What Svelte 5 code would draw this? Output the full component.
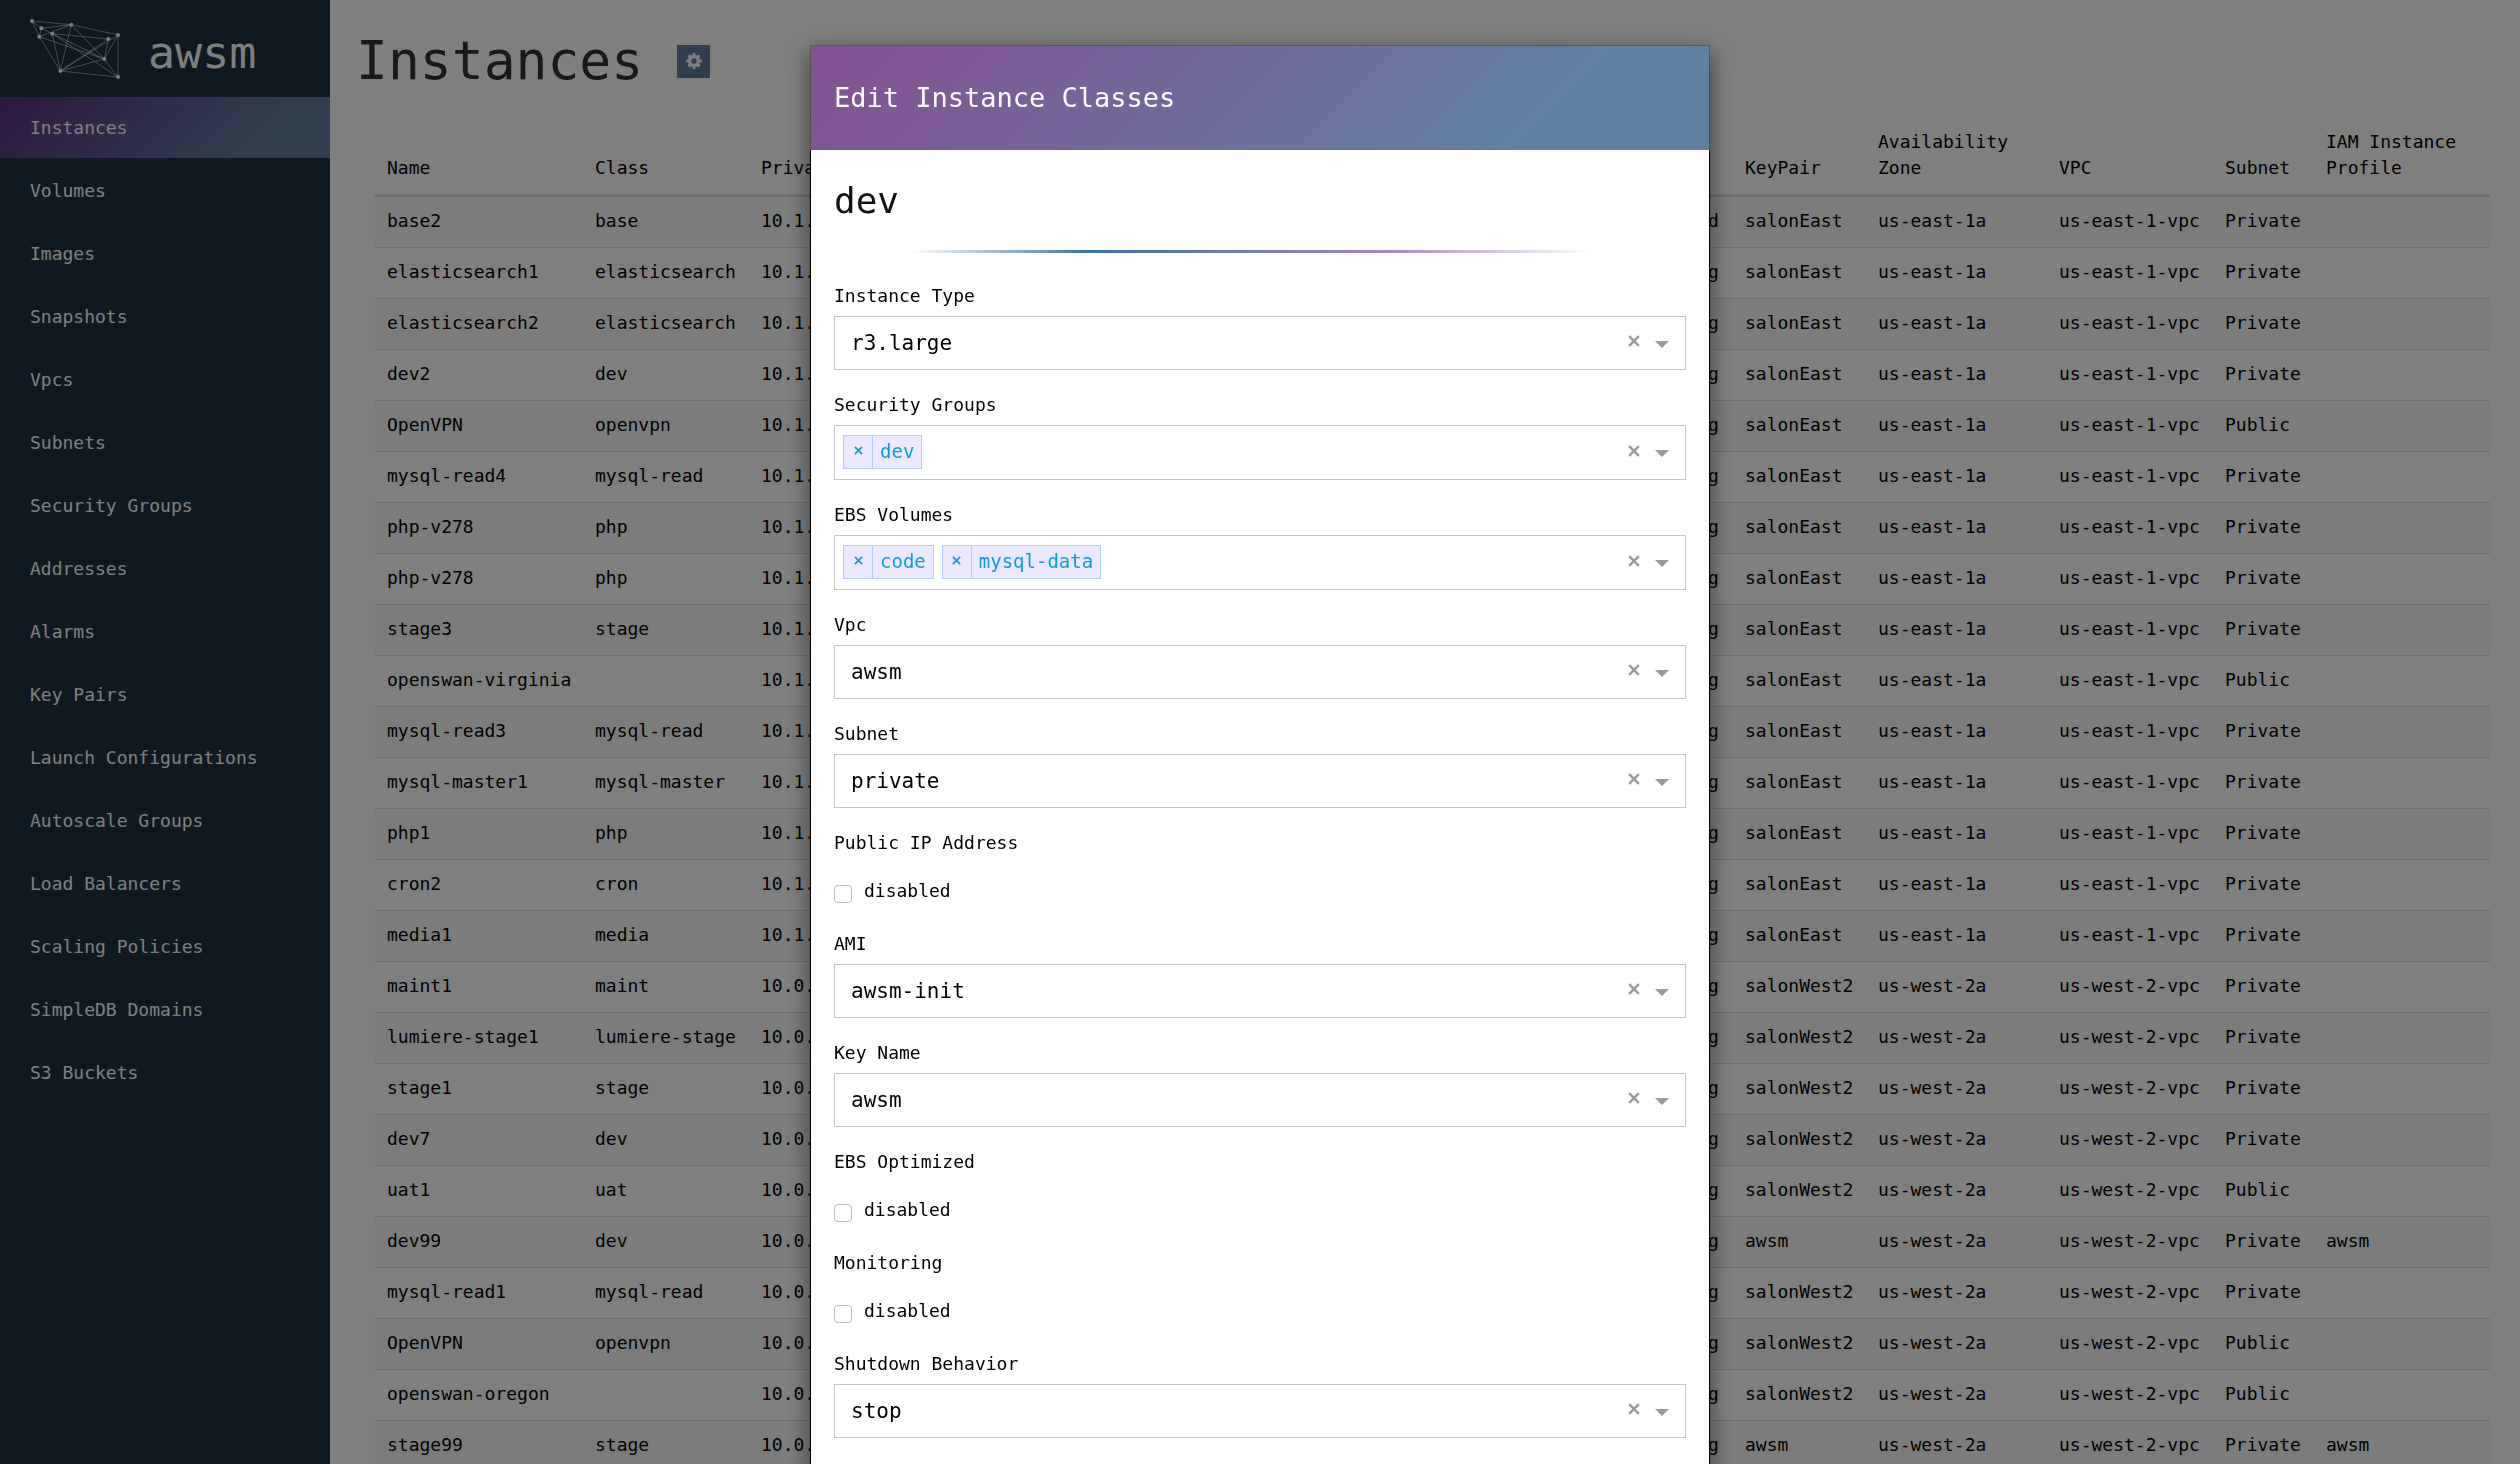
<script>
  const navItems = [
    'Instances',
    'Volumes',
    'Images',
    'Snapshots',
    'Vpcs',
    'Subnets',
    'Security Groups',
    'Addresses',
    'Alarms',
    'Key Pairs',
    'Launch Configurations',
    'Autoscale Groups',
    'Load Balancers',
    'Scaling Policies',
    'SimpleDB Domains',
    'S3 Buckets'
  ];

  /**
   * [name, class, region, subnet, key pair, iam profile]
   */
  const rows = [
    ['base2', 'base', 'east', 'Private', 'salonEast', ''],
    ['elasticsearch1', 'elasticsearch', 'east', 'Private', 'salonEast', ''],
    ['elasticsearch2', 'elasticsearch', 'east', 'Private', 'salonEast', ''],
    ['dev2', 'dev', 'east', 'Private', 'salonEast', ''],
    ['OpenVPN', 'openvpn', 'east', 'Public', 'salonEast', ''],
    ['mysql-read4', 'mysql-read', 'east', 'Private', 'salonEast', ''],
    ['php-v278', 'php', 'east', 'Private', 'salonEast', ''],
    ['php-v278', 'php', 'east', 'Private', 'salonEast', ''],
    ['stage3', 'stage', 'east', 'Private', 'salonEast', ''],
    ['openswan-virginia', '', 'east', 'Public', 'salonEast', ''],
    ['mysql-read3', 'mysql-read', 'east', 'Private', 'salonEast', ''],
    ['mysql-master1', 'mysql-master', 'east', 'Private', 'salonEast', ''],
    ['php1', 'php', 'east', 'Private', 'salonEast', ''],
    ['cron2', 'cron', 'east', 'Private', 'salonEast', ''],
    ['media1', 'media', 'east', 'Private', 'salonEast', ''],
    ['maint1', 'maint', 'west', 'Private', 'salonWest2', ''],
    ['lumiere-stage1', 'lumiere-stage', 'west', 'Private', 'salonWest2', ''],
    ['stage1', 'stage', 'west', 'Private', 'salonWest2', ''],
    ['dev7', 'dev', 'west', 'Private', 'salonWest2', ''],
    ['uat1', 'uat', 'west', 'Public', 'salonWest2', ''],
    ['dev99', 'dev', 'west', 'Private', 'awsm', 'awsm'],
    ['mysql-read1', 'mysql-read', 'west', 'Private', 'salonWest2', ''],
    ['OpenVPN', 'openvpn', 'west', 'Public', 'salonWest2', ''],
    ['openswan-oregon', '', 'west', 'Public', 'salonWest2', ''],
    ['stage99', 'stage', 'west', 'Private', 'awsm', 'awsm']
  ];

  const regions = {
    east: { ip: '10.1.', zone: 'us-east-1a', vpc: 'us-east-1-vpc' },
    west: { ip: '10.0.', zone: 'us-west-2a', vpc: 'us-west-2-vpc' }
  };

  const fields = [
    { id: 'type', label: 'Instance Type', kind: 'select', value: 'r3.large' },
    { id: 'groups', label: 'Security Groups', kind: 'multi', value: ['dev'] },
    { id: 'volumes', label: 'EBS Volumes', kind: 'multi', value: ['code', 'mysql-data'] },
    { id: 'vpc', label: 'Vpc', kind: 'select', value: 'awsm' },
    { id: 'subnet', label: 'Subnet', kind: 'select', value: 'private' },
    { id: 'public-ip', label: 'Public IP Address', kind: 'check' },
    { id: 'ami', label: 'AMI', kind: 'select', value: 'awsm-init' },
    { id: 'key', label: 'Key Name', kind: 'select', value: 'awsm' },
    { id: 'ebs', label: 'EBS Optimized', kind: 'check' },
    { id: 'monitoring', label: 'Monitoring', kind: 'check' },
    { id: 'shutdown', label: 'Shutdown Behavior', kind: 'select', value: 'stop' }
  ];

  // logo graph
  const points = [
    [6, 6], [34, 28], [28, 53], [67, 44], [124, 17],
    [235, 60], [264, 48], [223, 120], [264, 174], [91, 156]
  ];
  const edges = [
    [0, 4], [0, 1], [0, 2], [1, 4], [1, 2], [2, 4], [2, 9], [2, 7], [1, 3],
    [3, 5], [3, 9], [3, 7], [3, 8], [4, 6], [4, 9], [4, 7], [5, 7], [5, 9],
    [6, 7], [6, 8], [6, 9], [7, 9], [7, 8], [8, 9]
  ];
</script>

<div class="app">
  <aside>
    <div class="brand">
      <svg class="logo" viewBox="0 0 270 180" aria-hidden="true">
        {#each edges as [a, b]}
          <line x1={points[a][0]} y1={points[a][1]} x2={points[b][0]} y2={points[b][1]} />
        {/each}
        {#each points as [x, y]}
          <circle cx={x} cy={y} r="6" />
        {/each}
      </svg>
      <span>awsm</span>
    </div>
    <nav>
      {#each navItems as item, i}
        <a href="#{i}" class:active={i === 0}>{item}</a>
      {/each}
    </nav>
  </aside>

  <main>
    <header class="title">
      <h1>Instances</h1>
      <button class="gear" aria-label="Settings">
        <svg viewBox="0 0 16 16" aria-hidden="true">
          <path
            fill-rule="evenodd"
            d="M6.8 0h2.4l.4 2.1 1.2.5 1.8-1.2 1.9 1.9-1.2 1.8.5 1.2 2.2.4v2.5l-2.2.4-.5 1.2 1.2 1.8-1.9 1.9-1.8-1.2-1.2.5L9.2 16H6.8l-.4-2.2-1.2-.5-1.8 1.2-1.9-1.9 1.2-1.8-.5-1.2L0 9.2V6.7l2.2-.4.5-1.2-1.2-1.8 1.9-1.9 1.8 1.2 1.2-.5zM8 5.3a2.7 2.7 0 1 0 0 5.4 2.7 2.7 0 0 0 0-5.4z"
          />
        </svg>
      </button>
    </header>

    <table>
      <colgroup>
        <col class="c-name" />
        <col class="c-class" />
        <col />
        <col class="c-state" />
        <col class="c-key" />
        <col class="c-zone" />
        <col class="c-vpc" />
        <col class="c-subnet" />
        <col class="c-iam" />
      </colgroup>
      <thead>
        <tr>
          <th>Name</th>
          <th>Class</th>
          <th>Private IP</th>
          <th>State</th>
          <th>KeyPair</th>
          <th>Availability Zone</th>
          <th>VPC</th>
          <th>Subnet</th>
          <th>IAM Instance Profile</th>
        </tr>
      </thead>
      <tbody>
        {#each rows as [name, cls, region, subnet, key, iam], i}
          <tr>
            <td>{name}</td>
            <td>{cls}</td>
            <td>{regions[region].ip}</td>
            <td>{i === 0 ? 'stopped' : 'running'}</td>
            <td>{key}</td>
            <td>{regions[region].zone}</td>
            <td>{regions[region].vpc}</td>
            <td>{subnet}</td>
            <td>{iam}</td>
          </tr>
        {/each}
      </tbody>
    </table>
  </main>

  <div class="backdrop">
    <div class="modal" role="dialog" aria-labelledby="modal-title">
      <div class="modal-header">
        <h2 id="modal-title">Edit Instance Classes</h2>
      </div>
      <form class="modal-body">
        <h3>dev</h3>
        <hr />
        {#each fields as field}
          <div class="field">
            <label for={field.id}>{field.label}</label>
            {#if field.kind === 'check'}
              <div class="check">
                <input type="checkbox" id={field.id} />
                <span>disabled</span>
              </div>
            {:else}
              <div class="control" class:multi={field.kind === 'multi'}>
                {#if field.kind === 'multi'}
                  {#each field.value as tag}
                    <span class="tag">
                      <button type="button" aria-label="Remove {tag}">
                        <svg viewBox="0 0 10 10"><path d="M1 1l8 8M9 1l-8 8" /></svg>
                      </button>
                      <span>{tag}</span>
                    </span>
                  {/each}
                  <input type="text" id={field.id} />
                {:else}
                  <select id={field.id}>
                    <option>{field.value}</option>
                  </select>
                {/if}
                <button type="button" class="clear" aria-label="Clear {field.label}">
                  <svg viewBox="0 0 10 10"><path d="M1 1l8 8M9 1l-8 8" /></svg>
                </button>
                <span class="arrow"></span>
              </div>
            {/if}
          </div>
        {/each}
      </form>
    </div>
  </div>
</div>

<style>
  :global(body) {
    margin: 0;
    overflow: hidden;
  }

  .app {
    display: flex;
    height: 100vh;
    overflow: hidden;
    background: #fff;
    color: #000;
    font: 18px/26px 'DejaVu Sans Mono', monospace;
  }

  .app * {
    box-sizing: border-box;
  }

  button,
  input,
  select {
    margin: 0;
    padding: 0;
    border: 0;
    background: none;
    font: inherit;
    color: inherit;
  }

  h1,
  h2,
  h3 {
    margin: 0;
    font-weight: 400;
  }

  aside {
    flex: 0 0 330px;
    background: #1e3244;
    color: #fff;
  }

  .brand {
    display: flex;
    align-items: center;
    gap: 28px;
    height: 97px;
    padding: 0 30px;
    font-size: 45px;
    line-height: 60px;
  }

  .brand span {
    padding-top: 8px;
  }

  .logo {
    width: 90px;
    height: 60px;
  }

  .logo line {
    stroke: rgba(255, 255, 255, 0.5);
    stroke-width: 3;
  }

  .logo circle {
    fill: #fff;
  }

  nav {
    display: flex;
    flex-direction: column;
    gap: 2px;
  }

  nav a {
    padding: 18px 30px 17px;
    color: #fff;
    text-decoration: none;
  }

  nav a.active {
    background: linear-gradient(135deg, #60307e 0%, #5e7f9e 80%);
  }

  main {
    flex: 1;
    padding: 25px 30px 0 26px;
  }

  .title {
    display: flex;
    align-items: center;
    gap: 34px;
    height: 72px;
    color: #333;
  }

  h1 {
    font-size: 53px;
    line-height: 72px;
  }

  .gear {
    width: 33px;
    height: 33px;
    background: #5e7f9f;
  }

  .gear svg {
    display: block;
    width: 16px;
    height: 16px;
    margin: auto;
    fill: #fff;
  }

  table {
    width: calc(100% - 19px);
    margin: 20px 0 0 19px;
    border-collapse: collapse;
    table-layout: fixed;
  }

  .c-name {
    width: 208px;
  }

  .c-class,
  .c-vpc {
    width: 166px;
  }

  .c-state {
    width: 102px;
  }

  .c-subnet {
    width: 101px;
  }

  .c-key {
    width: 133px;
  }

  .c-zone {
    width: 181px;
  }

  .c-iam {
    width: 176px;
  }

  th,
  td {
    padding: 12px;
    text-align: left;
    font-weight: 400;
    white-space: nowrap;
  }

  th {
    padding-bottom: 13px;
    vertical-align: bottom;
    white-space: normal;
    border-bottom: 3px solid #ddd;
  }

  td {
    height: 51px;
    padding: 11px 12px 13px;
    border-top: 1px solid #ddd;
  }

  tbody tr:nth-child(odd) {
    background: #f9f9f9;
  }

  .backdrop {
    position: fixed;
    inset: 0;
    overflow: hidden;
    background: rgba(0, 0, 0, 0.5);
  }

  .modal {
    width: 900px;
    margin: 45px auto;
    border: 1px solid rgba(0, 0, 0, 0.2);
    background: #fff;
    background-clip: padding-box;
    box-shadow: 0 7px 22px rgba(0, 0, 0, 0.5);
  }

  .modal-header {
    padding: 32px 23px;
    background: linear-gradient(135deg, #855093 0%, #6080a2 80%);
    color: #fff;
  }

  h2 {
    font-size: 27px;
    line-height: 40px;
  }

  .modal-body {
    padding: 24px 23px;
    box-shadow: -1px 0 #000, 1px 0 #000;
  }

  h3 {
    font-size: 36px;
    line-height: 54px;
    color: #111;
  }

  hr {
    height: 3px;
    margin: 22px 0 30px;
    border: 0;
    background: linear-gradient(
      to right,
      transparent 9%,
      #3d719b 30%,
      #a688ba 65%,
      transparent 89%
    );
  }

  .field {
    margin-bottom: 22px;
  }

  .field > label {
    display: block;
    margin-bottom: 7px;
  }

  .control {
    display: flex;
    align-items: center;
    height: 54px;
    border: 1px solid #c6c6c6;
    font-size: 21px;
  }

  .control.multi {
    height: 55px;
    padding-left: 8px;
    gap: 8px;
  }

  .control select {
    flex: 1;
    height: 100%;
    padding-left: 16px;
    appearance: none;
  }

  .control input {
    flex: 1;
    min-width: 0;
  }

  .tag {
    display: flex;
    align-self: flex-start;
    height: 34px;
    margin-top: 9px;
    border: 1px solid #b3cdff;
    background: #ebe9ff;
    color: #0d9bdb;
    font-size: 19px;
  }

  .tag button {
    width: 29px;
    border-right: 1px solid #b3cdff;
  }

  .tag button svg {
    display: block;
    width: 9px;
    height: 9px;
    margin: 0 auto 4px;
  }

  .tag span {
    padding: 2px 7px;
  }

  svg path {
    stroke-width: 2;
  }

  .tag svg path {
    stroke: currentColor;
  }

  .clear {
    width: 12px;
    height: 24px;
  }

  .clear svg {
    display: block;
    width: 12px;
    height: 12px;
    margin-bottom: 4px;
    stroke: #999;
  }

  .arrow {
    margin: 2px 16px 0 15px;
    border: 7px solid transparent;
    border-top-color: #999;
    border-bottom: 0;
  }

  .multi .arrow {
    margin-left: 7px;
  }

  .check {
    display: flex;
    align-items: flex-start;
    gap: 12px;
    margin-top: 22px;
    height: 31px;
  }

  .check input {
    appearance: none;
    width: 18px;
    height: 18px;
    margin-top: 7px;
    border: 1px solid #bbb;
    border-radius: 4px;
    background: #fff;
  }
</style>
